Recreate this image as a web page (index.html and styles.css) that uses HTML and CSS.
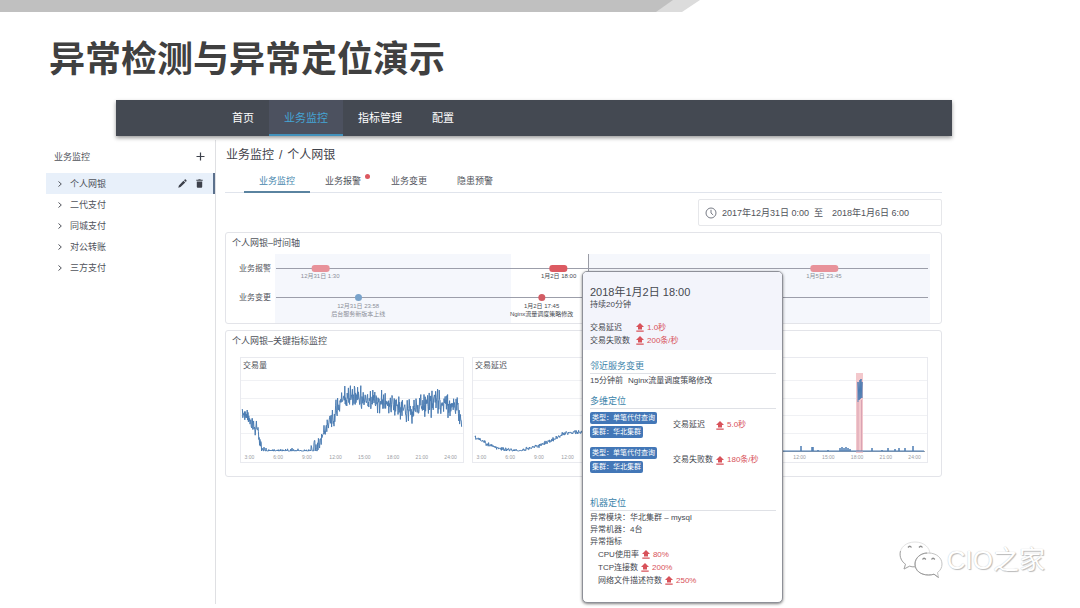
FILE: index.html
```html
<!DOCTYPE html>
<html lang="zh-CN">
<head>
<meta charset="utf-8">
<meta name="viewport" content="width=device-width, initial-scale=1">
<title>异常检测与异常定位演示</title>
<link rel="stylesheet" href="styles.css">
</head>
<body>
<svg class="symbols" aria-hidden="true">
  <symbol id="chevron" viewBox="0 0 6 8"><path d="M1.5 1.5 4.3 4 1.5 6.5" fill="none" stroke="currentColor"/></symbol>
  <symbol id="up" viewBox="0 0 8 9"><path d="M4 0 8 4H6V6.6H2V4H0Z M.3 7.6H7.7V8.7H.3Z" fill="currentColor"/></symbol>
</svg>

<div class="slide">
  <svg class="ribbon" viewBox="0 0 700 12" aria-hidden="true">
    <path d="M0 0H700L682 12H0Z" fill="#dcdcdc"/>
    <path d="M0 0H673L656 12H0Z" fill="#c0c0c0"/>
  </svg>
  <h1 class="title">异常检测与异常定位演示</h1>

  <nav class="topnav">
    <a href="#home">首页</a>
    <a href="#monitor" class="current" aria-current="page">业务监控</a>
    <a href="#metrics">指标管理</a>
    <a href="#config">配置</a>
  </nav>

  <div class="workspace">
    <aside class="sidebar">
      <div class="sidebar-head">
        <span>业务监控</span>
        <button class="icon-btn" aria-label="新增">
          <svg width="9" height="9" viewBox="0 0 9 9"><path d="M4.5 .5V8.5M.5 4.5H8.5" stroke="currentColor" stroke-width="1.2"/></svg>
        </button>
      </div>
      <ul class="tree">
        <li class="active">
          <button class="node"><svg class="chev"><use href="#chevron"/></svg>个人网银</button>
          <button class="icon-btn" aria-label="编辑">
            <svg width="9" height="9" viewBox="0 0 9 9"><path d="M.3 8.7 .9 6.5 5.4 1.7 7.3 3.6 2.5 8.1ZM6 1.2 6.8 .5Q7.3.1 7.8.6L8.4 1.2Q8.9 1.7 8.4 2.2L7.800 3Z" fill="currentColor"/></svg>
          </button>
          <button class="icon-btn" aria-label="删除">
            <svg width="7" height="9" viewBox="0 0 7 9"><path d="M.3 .8H2.2L2.6 .2H4.4L4.8 .8H6.7V1.8H.3ZM.8 2.4H6.2V7.8Q6.2 8.7 5.3 8.7H1.7Q.8 8.7 .8 7.8Z" fill="currentColor"/></svg>
          </button>
        </li>
        <li><button class="node"><svg class="chev"><use href="#chevron"/></svg>二代支付</button></li>
        <li><button class="node"><svg class="chev"><use href="#chevron"/></svg>同城支付</button></li>
        <li><button class="node"><svg class="chev"><use href="#chevron"/></svg>对公转账</button></li>
        <li><button class="node"><svg class="chev"><use href="#chevron"/></svg>三方支付</button></li>
      </ul>
    </aside>

    <main class="main">
      <h2 class="crumb"><span>业务监控</span><span>/</span><span>个人网银</span></h2>
      <div class="tabs" role="tablist">
        <button role="tab" aria-selected="true">业务监控</button>
        <button role="tab" aria-selected="false"><span class="dotted">业务报警</span></button>
        <button role="tab" aria-selected="false">业务变更</button>
        <button role="tab" aria-selected="false">隐患预警</button>
      </div>

      <button class="range">
        <svg width="12" height="12" viewBox="0 0 12 12" fill="none" stroke="#777b85"><circle cx="6" cy="6" r="5"/><path d="M6 2.8V6L8.2 8"/></svg>
        <span>2017年12月31日 0:00</span><span>至</span><span class="range-end">2018年1月6日 6:00</span>
      </button>

      <section class="panel timeline">
        <h3>个人网银–时间轴</h3>
        <div class="lanes">
          <div class="lane-names"><span>业务报警</span><span>业务变更</span></div>
          <div class="track">
            <div class="focus"></div>
            <div class="lane">
              <div class="event past" style="left:6.9%"><i class="pill"></i><span>12月31日 1:30</span></div>
              <div class="event" style="left:43.3%"><i class="pill"></i><span>1月2日 18:00</span></div>
              <div class="event past" style="left:83.8%"><i class="pill wide"></i><span>1月5日 23:45</span></div>
            </div>
            <div class="lane">
              <div class="event past" style="left:12.7%"><i class="dot blue"></i><span>12月31日 23:58</span><span>后台服务新版本上线</span></div>
              <div class="event" style="left:40.7%"><i class="dot"></i><span>1月2日 17:45</span><span>Nginx流量调度策略修改</span></div>
            </div>
          </div>
        </div>
      </section>

      <section class="panel metrics">
        <h3>个人网银–关键指标监控</h3>
        <div class="charts">
          <figure class="chart" data-series="volume" data-from="3" data-to="24"><figcaption>交易量</figcaption></figure>
          <figure class="chart" data-series="latency" data-from="3" data-to="12"><figcaption>交易延迟</figcaption></figure>
          <figure class="chart" data-series="failures" data-from="12" data-to="24"></figure>
        </div>
      </section>

      <div class="popover" role="dialog" aria-label="异常详情">
        <header>
          <h3>2018年1月2日 18:00</h3>
          <p>持续20分钟</p>
          <dl class="summary">
            <dt>交易延迟</dt><dd class="rise"><svg><use href="#up"/></svg>1.0秒</dd>
            <dt>交易失败数</dt><dd class="rise"><svg><use href="#up"/></svg>200条/秒</dd>
          </dl>
        </header>
        <section>
          <h4>邻近服务变更</h4>
          <p class="change"><span>15分钟前</span><span>Nginx流量调度策略修改</span></p>
        </section>
        <section class="dims">
          <h4>多维定位</h4>
          <div class="dim">
            <div class="tags"><span>类型：单笔代付查询</span><span>集群：华北集群</span></div>
            <span class="dim-name">交易延迟</span><span class="rise"><svg><use href="#up"/></svg>5.0秒</span>
          </div>
          <div class="dim">
            <div class="tags"><span>类型：单笔代付查询</span><span>集群：华北集群</span></div>
            <span class="dim-name">交易失败数</span><span class="rise"><svg><use href="#up"/></svg>180条/秒</span>
          </div>
        </section>
        <section class="machine">
          <h4>机器定位</h4>
          <p>异常模块：华北集群 – mysql</p>
          <p>异常机器：4台</p>
          <p>异常指标</p>
          <ul>
            <li>CPU使用率<span class="rise"><svg><use href="#up"/></svg>80%</span></li>
            <li>TCP连接数<span class="rise"><svg><use href="#up"/></svg>200%</span></li>
            <li>网络文件描述符数<span class="rise"><svg><use href="#up"/></svg>250%</span></li>
          </ul>
        </section>
      </div>
    </main>
  </div>

  <div class="brand">
    <svg width="44" height="38" viewBox="0 0 44 38" fill="#fff" stroke="#c4c4c4" aria-hidden="true">
      <path d="M16 1C7 1 1 6.500 1 13.500 1 17.500 3 21 6.500 23.200L5 28 10.500 25.200Q13 26 17 25.800C26 25.500 31 20 31 13.500 31 6.500 25 1 16 1Z" stroke="#e2e2e2"/>
      <path d="M1.500 10C0 16 3 21 6.500 23.200L5 28 10.500 25.200Q13 26 16 25.800" fill="none" stroke="#a8a8a8"/>
      <path d="M29.500 12C21.500 12 16 17 16 23 16 29.500 21.500 34 29.500 34Q32.500 34 35 33.200L39.500 36.500 38.500 31.500C41.500 29.500 43 26.500 43 23 43 17 37.500 12 29.500 12Z"/>
      <path d="M28 12C21.500 12 16 17 16 23 16 29.500 21.500 34 29.500 34Q32.500 34 35 33.200L39.500 36.500" fill="none" stroke="#9c9c9c"/>
      <path d="M9 6.500Q10.800 4 12.500 6.500M20 6.500Q21.800 4 23.500 6.500M23.500 18.500Q25 16 26.800 18.500M32.500 18.500Q34 16 35.800 18.500" fill="none" stroke="#8e8e8e" stroke-width="1.300"/>
    </svg>
    <span>CIO之家</span>
  </div>
</div>
<script src="charts.js"></script>
</body>
</html>
```

FILE: styles.css
```css
* { box-sizing: border-box; }
body, h1, h2, h3, h4, p, ul, dl, dd, figure { margin: 0; padding: 0; }
ul { list-style: none; }
h2, h3, h4 { font-weight: 400; }
body {
  background: #fff;
  color: #50535b;
  font: 9px/12px "Liberation Sans", "Noto Sans CJK SC", sans-serif;
}
button {
  border: 0;
  padding: 0;
  background: none;
  color: inherit;
  font: inherit;
  cursor: pointer;
}
svg { display: block; }
.symbols { position: absolute; width: 0; height: 0; }

.slide { position: relative; min-height: 100vh; padding-right: 128px; }
.ribbon { height: 12px; }
.title {
  margin: 22px 0 14px 49px;
  color: #404040;
  font-size: 36px;
  line-height: 52px;
  font-weight: 700;
}

.topnav {
  position: relative;
  display: flex;
  height: 36px;
  margin-left: 116px;
  padding-left: 101px;
  background: #444952;
  box-shadow: 0 2px 4px rgba(0, 0, 0, .4);
}
.topnav a {
  padding: 0 15px;
  color: #fff;
  font-size: 11px;
  line-height: 36px;
  text-decoration: none;
}
.topnav .current {
  background: #4c515f;
  box-shadow: inset 0 -2px #4291bb;
  color: #45a5d6;
}

.workspace {
  display: grid;
  grid-template-columns: 170px 1fr;
  margin: 4px 0 0 46px;
}
.sidebar { min-height: 464px; border-right: 1px solid #dfe0e3; }
.sidebar-head {
  display: flex;
  align-items: center;
  justify-content: space-between;
  height: 33px;
  padding: 0 10px 0 8px;
}
.icon-btn { color: #3d414b; }
.tree li {
  display: flex;
  align-items: center;
  gap: 9px;
  height: 21px;
  padding: 0 12px 0 11px;
}
.tree .active { background: #e8f0fa; box-shadow: inset -2px 0 #5b708c; }
.node { display: flex; flex: 1; align-items: center; gap: 7px; }
.chev { width: 6px; height: 8px; }

.main { position: relative; padding: 0 10px 0 9px; }
.crumb {
  display: flex;
  gap: 5px;
  padding: 6px 1px;
  color: #3f424a;
  font-size: 12px;
  line-height: 18px;
}
.tabs {
  display: flex;
  height: 23px;
  padding-left: 19px;
  border-bottom: 1px solid #e0e4ec;
}
.tabs button { width: 66px; margin-bottom: -1px; border-bottom: 2px solid transparent; }
.tabs [aria-selected="true"] { border-color: #5a83a0; color: #4586ad; }
.dotted { position: relative; }
.dotted::after {
  content: "";
  position: absolute;
  top: -2px;
  right: -9px;
  width: 5px;
  height: 5px;
  border-radius: 50%;
  background: #dc5860;
}
.range {
  display: flex;
  align-items: center;
  gap: 5px;
  width: 244px;
  height: 27px;
  margin: 6px 0 6px auto;
  padding: 0 6px;
  border: 1px solid #e6e7ea;
  border-radius: 2px;
}
.range-end { margin-left: 4px; }

.panel {
  margin-bottom: 6px;
  border: 1px solid #e3e4e9;
  border-radius: 3px;
}
.panel > h3 { padding: 4px 6px 0; font-size: 9px; line-height: 12px; }
.lanes { display: flex; gap: 4px; margin-top: 5px; padding: 0 11px 0 13px; }
.lane-names { font-size: 8px; }
.lane-names span { display: block; height: 29px; line-height: 29px; }
.track { position: relative; flex: 1; height: 69px; background: #f5f7fc; }
.focus {
  position: absolute;
  inset: 0 52% 0 36%;
  border-right: 1px solid #9a9ca5;
  background: #fff;
}
.lane { position: relative; height: 29px; padding: 14px 2px 0 1px; }
.lane::before { content: ""; display: block; border-top: 1px solid #9c9eaa; }
.event {
  position: absolute;
  top: 11px;
  display: flex;
  flex-direction: column;
  align-items: center;
  transform: translateX(-50%);
  color: #464950;
  font-size: 6px;
  line-height: 8px;
  white-space: nowrap;
}
.event.past { color: #8c8f98; }
.pill { width: 18px; height: 7px; border-radius: 3px; background: #dc5a62; }
.pill.wide { width: 28px; }
.past .pill { background: #e8929a; }
.dot { width: 7px; height: 7px; margin-bottom: 1px; border-radius: 50%; background: #d25c64; }
.dot.blue { background: #79a3cb; }

.charts {
  display: grid;
  grid-template-columns: repeat(3, 1fr);
  gap: 8px;
  padding: 10px 13px 13px 14px;
}
.chart {
  display: flex;
  flex-direction: column;
  justify-content: flex-end;
  min-width: 0;
  border: 1px solid #e9eaef;
}
.chart figcaption { height: 12px; padding: 2px; font-size: 8px; }
.plot { width: 100%; height: 83px; overflow: visible; }
.plot path { fill: none; vector-effect: non-scaling-stroke; }
.plot .grid { stroke: #f0f1f4; }
.plot .axis { stroke: #9aa4ae; }
.plot .series { stroke: #4c7db3; stroke-width: 1; stroke-linejoin: round; }
.plot .alert { fill: #f3c8cc; }
.plot .alert-line { stroke: #d9a3b3; }
.ticks {
  display: grid;
  grid-template-columns: repeat(8, 1fr);
  margin: 0 -2px 0 -6px;
  color: #999ca3;
  font-size: 5px;
  line-height: 9px;
  text-align: center;
}

.popover {
  position: absolute;
  top: 131px;
  left: 366px;
  width: 201px;
  overflow: hidden;
  padding-bottom: 15px;
  border: 1px solid #8e9098;
  border-radius: 5px;
  background: #fff;
  box-shadow: 0 1px 3px rgba(0, 0, 0, .5);
  color: #45484f;
  font-size: 8px;
}
.popover header { padding: 13px 7px 3px; background: #f3f4fb; }
.popover header h3 { font-size: 11px; line-height: 14px; }
.popover section { padding: 9px 6px 0 7px; }
.summary {
  display: grid;
  grid-template-columns: 46px 1fr;
  margin-top: 10px;
  line-height: 13px;
}
.popover h4 {
  margin-bottom: 1px;
  border-bottom: 1px solid #dfe1e6;
  color: #3c84aa;
  font-size: 9px;
  line-height: 14px;
}
.change { display: flex; gap: 5px; }
.rise { display: inline-flex; align-items: center; gap: 3px; color: #d8525a; }
.rise svg { width: 8px; height: 9px; }
.popover .dims { padding-top: 7px; }
.dim { display: flex; align-items: center; height: 26px; margin: 3px 0 9px; }
.tags { display: flex; flex-direction: column; align-items: flex-start; gap: 2px; width: 83px; }
.tags span {
  padding: 0 2px;
  border-radius: 2px;
  background: #4377b7;
  color: #fff;
  font-size: 7px;
  line-height: 12px;
}
.dim-name { width: 43px; }
.popover .machine { padding-top: 14px; }
.machine p { line-height: 12px; }
.machine li { display: flex; gap: 3px; padding-left: 8px; line-height: 13px; }

.brand {
  position: absolute;
  right: 35px;
  bottom: 29px;
  display: flex;
  align-items: center;
  gap: 4px;
  color: #fff;
  font-size: 26px;
  line-height: 38px;
  text-shadow: 0 0 1px #bbb, 1px 1px 1px #bbb;
}
```

FILE: charts.js
```js
(function () {
  var NS = "http://www.w3.org/2000/svg";
  var W = 222, H = 83, BASE = 81;
  var seed = 11;

  function rand() {
    seed = (seed * 16807) % 2147483647;
    return seed / 2147483647;
  }

  function level(points, x) {
    for (var i = 1; i < points.length; i++) {
      if (x <= points[i][0]) {
        var a = points[i - 1], b = points[i];
        return a[1] + (b[1] - a[1]) * (x - a[0]) / (b[0] - a[0]);
      }
    }
    return points[points.length - 1][1];
  }

  function trace(points, noise, step) {
    var d = "";
    for (var x = points[0][0]; x <= points[points.length - 1][0]; x += step) {
      var n = (rand() + rand() - 1) * noise(x);
      var y = Math.min(BASE, level(points, x) + n);
      d += (d ? "L" : "M") + x.toFixed(2) + " " + y.toFixed(2);
    }
    return d;
  }

  var series = {
    volume: function () {
      return trace(
        [[1, 45], [6, 47], [11, 51], [17, 62], [21, 78], [25, 81], [70, 81], [76, 77], [84, 60], [91, 47],
         [98, 36], [104, 27], [115, 25], [126, 29], [138, 33], [150, 35], [160, 37], [172, 39], [182, 37],
         [195, 32], [208, 36], [216, 40], [221, 50]],
        function (x) { return x < 23 ? 9 : x < 70 ? 3 : x < 90 ? 9 : 15; }, 0.4);
    },
    latency: function () {
      return trace(
        [[2, 67], [14, 74], [28, 79], [46, 81], [62, 77], [78, 71], [90, 64], [100, 62], [125, 63],
         [160, 60], [190, 64], [220, 72]],
        function () { return 2.5; }, 0.4);
    },
    failures: function () {
      var d = "M1 81";
      [[28, 3], [52, 4], [96, 5], [107, 4], [108, 4], [113, 1], [123, 1], [135, 3], [137, 4], [139, 3],
       [141, 4], [143, 3], [145, 2], [167, 3], [177, 1], [183, 3], [190, 2], [194, 3], [200, 3], [208, 5]]
        .forEach(function (s) {
          d += "H" + s[0] + "V" + (BASE - s[1]) + "V81";
        });
      return d + "H219M153 32V12L154 30 155 10V29L156 9V28L157 12V28";
    }
  };

  function add(svg, name, attrs) {
    var el = document.createElementNS(NS, name);
    Object.keys(attrs).forEach(function (k) { el.setAttribute(k, attrs[k]); });
    svg.appendChild(el);
  }

  document.querySelectorAll(".chart").forEach(function (chart) {
    var name = chart.dataset.series;
    var svg = document.createElementNS(NS, "svg");
    svg.setAttribute("class", "plot");
    svg.setAttribute("viewBox", "0 0 " + W + " " + H);
    svg.setAttribute("preserveAspectRatio", "none");
    add(svg, "path", { "class": "grid", d: "M0 10.5H222M0 28.5H222M0 45.5H222M0 63.5H222" });
    if (name === "failures") {
      add(svg, "path", { "class": "axis", d: "M0 81.5H220" });
      add(svg, "rect", { "class": "alert", x: 151, y: 3, width: 7, height: 80 });
      add(svg, "path", { "class": "alert-line", d: "M153 32V81M156.5 30V81" });
    }
    add(svg, "path", { "class": "series", d: series[name]() });
    chart.appendChild(svg);

    // Hours outside from..to sit under the popover and stay unlabelled.
    var ticks = document.createElement("div");
    ticks.className = "ticks";
    for (var h = 3; h <= 24; h += 3) {
      var t = document.createElement("span");
      if (h >= +chart.dataset.from && h <= +chart.dataset.to) {
        t.textContent = h + ":00";
      }
      ticks.appendChild(t);
    }
    chart.appendChild(ticks);
  });
})();
```
